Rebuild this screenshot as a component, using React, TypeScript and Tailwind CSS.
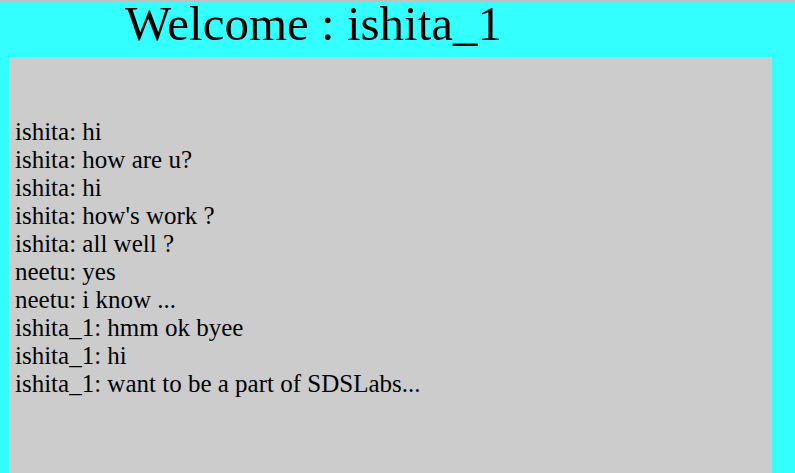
export default function App() {
  const lines = [
    "ishita: hi",
    "ishita: how are u?",
    "ishita: hi",
    "ishita: how's work ?",
    "ishita: all well ?",
    "neetu: yes",
    "neetu: i know ...",
    "ishita_1: hmm ok byee",
    "ishita_1: hi",
    "ishita_1: want to be a part of SDSLabs...",
  ];
  return (
    <div
      className="h-[473px] overflow-hidden bg-[#33ffff] border-t-2 border-[#c0c0c0] text-black"
      style={{ fontFamily: '"Liberation Serif", "Times New Roman", serif' }}
    >
      <div className="h-[55px] pl-[125px] text-[49px] leading-[43px]">Welcome : ishita_1</div>
      <div className="ml-[9px] w-[763px] h-[416px] bg-[#cccccc] pl-[6px] pt-[61px] text-[25px] leading-[28px]">
        {lines.map((l, i) => (
          <div key={i}>{l}</div>
        ))}
      </div>
    </div>
  );
}
